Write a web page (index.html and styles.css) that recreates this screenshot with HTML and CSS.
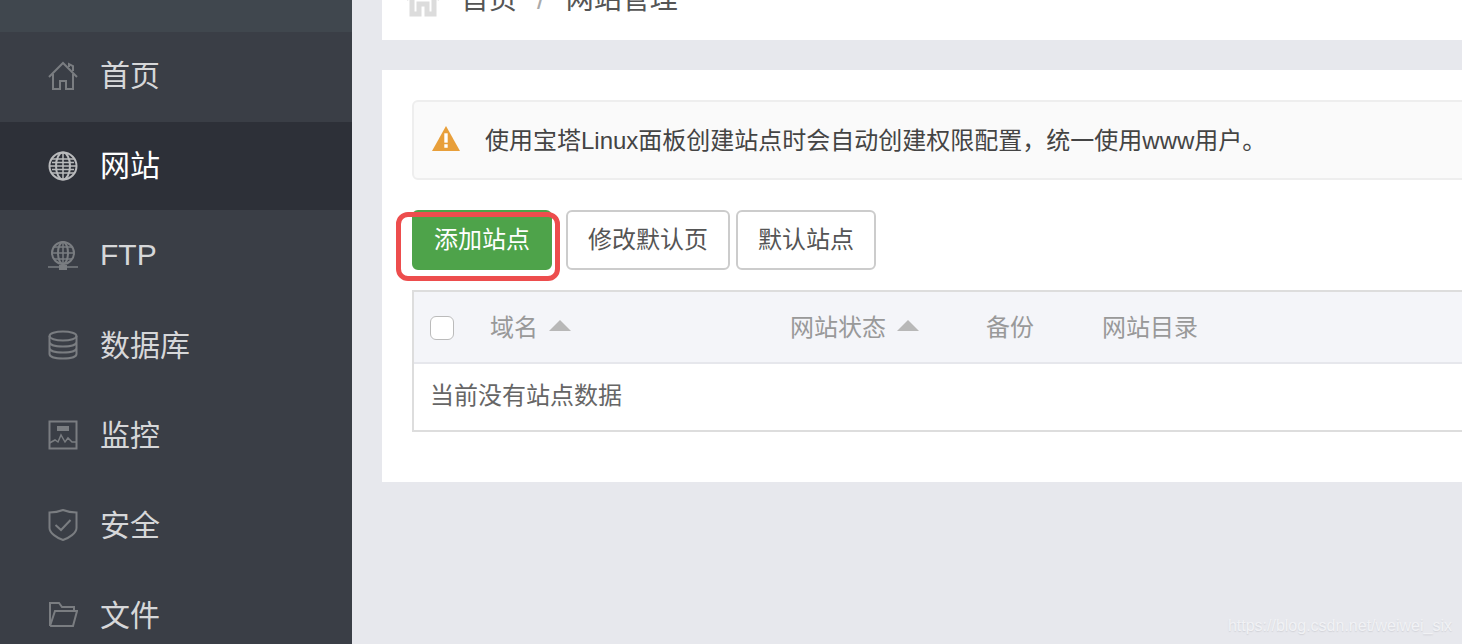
FILE: index.html
```html
<!DOCTYPE html>
<html lang="zh-CN">
<head>
    <meta charset="UTF-8">
    <title>网站管理</title>
    <link rel="stylesheet" href="styles.css">
</head>
<body>
    <div class="sidebar">
        <div class="side-top"></div>
        <a class="menu-item menu-home">
            <svg class="menu-icon" viewBox="0 0 30 30"><path d="M1 16 L15 2 L29 16 M5 13 V28 H12 V20 H18 V28 H25 V13 M21 6 L21 3 L25 5 V10"/></svg>
            <span>首页</span>
        </a>
        <a class="menu-item active">
            <svg class="menu-icon" viewBox="0 0 30 30"><circle cx="15" cy="15" r="13.500"/><ellipse cx="15" cy="15" rx="7" ry="13.500"/><path class="thin" d="M15 1.500 V28.500 M1.500 15 H28.500 M3.500 8 H26.500 M3.500 22 H26.500 M4 11.500 H26 M4 18.500 H26"/></svg>
            <span>网站</span>
        </a>
        <a class="menu-item menu-ftp">
            <svg class="menu-icon" viewBox="0 0 30 30"><circle cx="15" cy="12" r="11"/><ellipse cx="15" cy="12" rx="5" ry="11"/><path class="thin" d="M15 1 V23 M4 12 H26 M6 6 H24 M6 18 H24 M0 26 H30"/><rect class="fill" x="11" y="24" width="8" height="5"/></svg>
            <span>FTP</span>
        </a>
        <a class="menu-item">
            <svg class="menu-icon" viewBox="0 0 30 30"><ellipse cx="15" cy="6" rx="13.500" ry="4.500"/><path d="M1.500 6 V24 C1.500 27 8 28.500 15 28.500 C22 28.500 28.500 27 28.500 24 V6 M1.500 12 C1.500 15 8 16.500 15 16.500 C22 16.500 28.500 15 28.500 12 M1.500 18 C1.500 21 8 22.500 15 22.500 C22 22.500 28.500 21 28.500 18"/></svg>
            <span>数据库</span>
        </a>
        <a class="menu-item">
            <svg class="menu-icon" viewBox="0 0 30 30"><rect x="1.500" y="1.500" width="27" height="27"/><path class="thin" d="M1.500 23 L7 20 L10 22 L13 15 L17 22 L20 18 L24 22 L28.500 22"/><rect class="fill" x="9" y="6" width="12" height="5"/></svg>
            <span>监控</span>
        </a>
        <a class="menu-item">
            <svg class="menu-icon menu-shield" viewBox="0 0 30 32"><path d="M15 1 C10 3 6 3.500 1.500 3.500 V19 C1.500 24 9 29 15 31 C21 29 28.500 24 28.500 19 V3.500 C24 3.500 20 3 15 1 Z M7.500 16 L13 21 L22.500 11"/></svg>
            <span>安全</span>
        </a>
        <a class="menu-item">
            <svg class="menu-icon" viewBox="0 0 30 30"><path d="M2 26 V3 H11 L14 7 H26 V11 M2 26 H25 L29 11 H7 L2 26"/></svg>
            <span>文件</span>
        </a>
    </div>

    <div class="main">
        <div class="crumbs">
            <div class="crumbs-inner">
                <svg class="crumb-icon" viewBox="0 0 38 36"><path d="M2 18 L19 3 L36 18 M8 15 V33 H15 V23 H23 V33 H30 V15"/></svg>
                <span>首页</span>
                <span class="crumb-sep">/</span>
                <span>网站管理</span>
            </div>
        </div>

        <div class="card">
            <div class="alert">
                <svg class="alert-icon" viewBox="0 0 28 24" preserveAspectRatio="none"><path d="M14 0 L28 24 H0 Z" fill="#e89f3a"/><rect x="12.300" y="7" width="3.400" height="9" fill="#fff"/><rect x="12.300" y="17.500" width="3.400" height="3.400" fill="#fff"/></svg>
                <span>使用宝塔Linux面板创建站点时会自动创建权限配置，统一使用www用户。</span>
            </div>

            <div class="toolbar">
                <div class="btn btn-green">添加站点</div>
                <div class="btn btn-one">修改默认页</div>
                <div class="btn">默认站点</div>
                <div class="red-mark"></div>
            </div>

            <div class="site-table">
                <div class="table-head">
                    <div class="col-check"><div class="checkbox"></div></div>
                    <div class="col-domain">域名<i class="sort"></i></div>
                    <div class="col-status">网站状态<i class="sort"></i></div>
                    <div class="col-backup">备份</div>
                    <div class="col-path">网站目录</div>
                </div>
                <div class="table-empty">当前没有站点数据</div>
            </div>
        </div>
    </div>

    <div class="watermark">https://blog.csdn.net/weiwei_six</div>
</body>
</html>
```

FILE: styles.css
```css
html, body {
    height: 100%;
}

body {
    margin: 0;
    display: flex;
    overflow: hidden;
    background-color: #e7e8ed;
    font-family: "Liberation Sans", "Noto Sans CJK SC", sans-serif;
    color: #555;
}

.sidebar {
    width: 352px;
    flex-shrink: 0;
    background-color: #3a3e46;
}

.side-top {
    height: 32px;
    background-color: #40474e;
}

.menu-item {
    height: 90px;
    padding-left: 48px;
    display: flex;
    align-items: center;
    color: #d6d7d9;
    font-size: 30px;
}

.menu-item span {
    margin-bottom: 4px;
}

.menu-home span {
    margin-bottom: 8px;
}

.menu-home .menu-icon {
    margin-bottom: 2px;
}

.menu-ftp span {
    margin-bottom: 0;
}

.menu-ftp .menu-icon {
    margin-top: 2px;
}

.menu-item.active {
    height: 88px;
    background-color: #2d3038;
    color: #fff;
}

.menu-item.active span {
    margin-bottom: 6px;
}

.menu-icon {
    width: 30px;
    height: 30px;
    margin-right: 22px;
    flex-shrink: 0;
    fill: none;
    stroke: #7a7d81;
    stroke-width: 2;
}

.menu-shield {
    height: 32px;
}

.menu-icon .fill {
    fill: #7a7d81;
    stroke: none;
}

.menu-icon .thin {
    stroke-width: 1.500;
}

.active .menu-icon {
    stroke: #b9babc;
}

.main {
    flex: 1;
    min-width: 0;
    padding-left: 30px;
}

.crumbs {
    height: 40px;
    background-color: #fff;
    overflow: hidden;
}

.crumbs-inner {
    margin-top: -23px;
    padding-left: 22px;
    height: 40px;
    display: flex;
    align-items: center;
    font-size: 28px;
    color: #555;
}

.crumb-icon {
    width: 38px;
    height: 36px;
    margin: 4px 19px 0 0;
    fill: none;
    stroke: #dcdcdc;
    stroke-width: 5;
}

.crumb-sep {
    margin: 6px 21px 0 20px;
    color: #aaa;
}

.card {
    margin-top: 30px;
    height: 412px;
    padding: 30px 0 0 30px;
    box-sizing: border-box;
    background-color: #fff;
}

.alert {
    height: 80px;
    box-sizing: border-box;
    margin-right: -10px;
    padding-left: 18px;
    display: flex;
    align-items: center;
    background-color: #fafafa;
    border: 2px solid #eee;
    border-radius: 6px;
    font-size: 24px;
    color: #444;
}

.alert span {
    margin-bottom: 4px;
}

.alert-icon {
    width: 28px;
    height: 25px;
    margin: 0 25px 3px 0;
}

.toolbar {
    position: relative;
    margin-top: 30px;
    display: flex;
    gap: 6px;
}

.btn {
    height: 60px;
    box-sizing: border-box;
    padding: 0 20px 5px;
    display: flex;
    align-items: center;
    background-color: #fff;
    border: 2px solid #ccc;
    border-radius: 6px;
    font-size: 24px;
    color: #555;
}

.btn-green {
    background-color: #4ea34a;
    border-color: #4ea34a;
    color: #fff;
    margin-right: 8px;
}

.red-mark {
    position: absolute;
    left: -16px;
    top: 2px;
    width: 164px;
    height: 69px;
    box-sizing: border-box;
    border: 5px solid #ed4d4d;
    border-radius: 12px;
}

.site-table {
    margin-top: 20px;
    margin-right: -10px;
    border: 2px solid #ddd;
}

.table-head {
    height: 72px;
    box-sizing: border-box;
    padding-bottom: 4px;
    display: flex;
    align-items: center;
    background-color: #f4f5f9;
    border-bottom: 2px solid #e6e7ec;
    font-size: 24px;
    color: #999;
}

.col-check {
    width: 76px;
    padding: 6px 0 0 16px;
    box-sizing: border-box;
}

.col-domain {
    width: 300px;
}

.col-status {
    width: 196px;
}

.col-backup {
    width: 116px;
}

.checkbox {
    width: 24px;
    height: 24px;
    box-sizing: border-box;
    background-color: #fff;
    border: 1px solid #bbb;
    border-radius: 6px;
}

.sort {
    display: inline-block;
    margin-left: 11px;
    vertical-align: 5px;
    border-left: 11px solid transparent;
    border-right: 11px solid transparent;
    border-bottom: 11px solid #b8b8b8;
}

.table-empty {
    height: 66px;
    padding: 0 0 8px 16px;
    box-sizing: border-box;
    display: flex;
    align-items: center;
    font-size: 24px;
    color: #666;
}

.watermark {
    position: absolute;
    right: 10px;
    bottom: 9px;
    font-size: 16px;
    color: #f1f2f5;
    text-shadow: 0 1px 1px rgba(150, 150, 160, 0.25);
}
```
